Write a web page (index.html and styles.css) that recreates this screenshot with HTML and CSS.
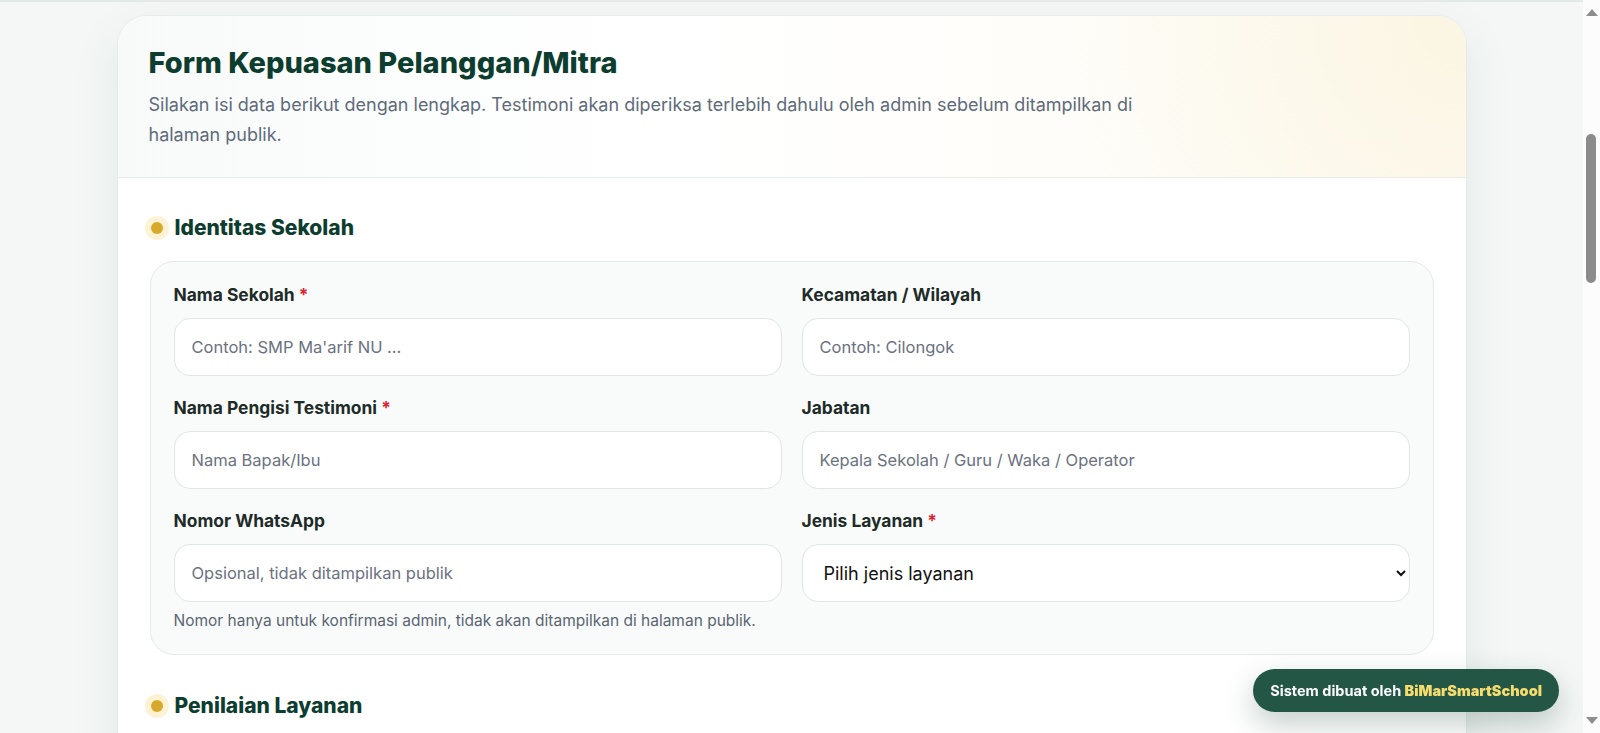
FILE: index.html
```html
<!DOCTYPE html>
<html lang="id">
<head>
  <meta charset="UTF-8" />
  <title>Form Kepuasan Pelanggan/Mitra - BiMarSmartSchool</title>
  <link rel="stylesheet" href="styles.css">
</head>
<body>

  <main class="page">
    <form class="form-card" onsubmit="return false">

      <div class="form-head">
        <h1>Form Kepuasan Pelanggan/Mitra</h1>
        <p>Silakan isi data berikut dengan lengkap. Testimoni akan diperiksa terlebih dahulu oleh admin sebelum ditampilkan di halaman publik.</p>
      </div>

      <div class="form-body">

        <!-- identitas -->
        <section class="form-section">
          <h3 class="section-title"><span class="dot"></span>Identitas Sekolah</h3>
          <div class="panel grid-2">
            <div class="field">
              <label>Nama Sekolah <span class="req">*</span></label>
              <input type="text" placeholder="Contoh: SMP Ma'arif NU ..." />
            </div>
            <div class="field">
              <label>Kecamatan / Wilayah</label>
              <input type="text" placeholder="Contoh: Cilongok" />
            </div>
            <div class="field">
              <label>Nama Pengisi Testimoni <span class="req">*</span></label>
              <input type="text" placeholder="Nama Bapak/Ibu" />
            </div>
            <div class="field">
              <label>Jabatan</label>
              <input type="text" placeholder="Kepala Sekolah / Guru / Waka / Operator" />
            </div>
            <div class="field">
              <label>Nomor WhatsApp</label>
              <input type="text" placeholder="Opsional, tidak ditampilkan publik" />
              <small class="hint">Nomor hanya untuk konfirmasi admin, tidak akan ditampilkan di halaman publik.</small>
            </div>
            <div class="field">
              <label>Jenis Layanan <span class="req">*</span></label>
              <select>
                <option>Pilih jenis layanan</option>
                <option>Aplikasi Rapor Digital</option>
                <option>Website Sekolah</option>
                <option>PPDB Online</option>
              </select>
            </div>
          </div>
        </section>

        <!-- penilaian -->
        <section class="form-section">
          <h3 class="section-title"><span class="dot"></span>Penilaian Layanan</h3>
          <div class="panel rating-panel"></div>
        </section>

      </div>
    </form>
  </main>

  <div class="credit">Sistem dibuat oleh <b>BiMarSmartSchool</b></div>

  <!-- scrollbar jendela -->
  <div class="scrollbar" aria-hidden="true">
    <span class="sb-up"></span>
    <span class="sb-thumb"></span>
    <span class="sb-down"></span>
  </div>

</body>
</html>
```

FILE: styles.css
```css
* {
  box-sizing: border-box;
}

body {
  margin: 0;
  padding-right: 17px;
  background: #f4f7f6;
  border-top: 2px solid #e4e8e7;
  font-family: 'Inter', 'Noto Sans', sans-serif;
  color: #1e2b28;
}

/* kartu form */
.page {
  max-width: 1350px;
  margin: 0 auto;
  padding: 13px 0 60px;
}

.form-card {
  background: white;
  border: 1px solid #e6ebe9;
  border-radius: 30px;
  box-shadow: 0 18px 50px rgba(20, 60, 45, 0.08);
  overflow: hidden;
}

.form-head {
  padding: 29px 31px 27px;
  border-bottom: 1px solid #e8edeb;
  background:
    radial-gradient(circle at 100% 0%, #fbf5e2 0%, rgba(251,245,226,0) 30%),
    linear-gradient(90deg, #f8fafa 0%, #ffffff 40%, #fdfbf4 100%);
}

.form-head h1 {
  margin: 0 0 9px;
  font-size: 29px;
  line-height: 36px;
  font-weight: 800;
  color: #0c3d2f;
}

.form-head p {
  margin: 0;
  max-width: 1000px;
  font-size: 18px;
  line-height: 30px;
  color: #5e6b7b;
}

.form-body {
  padding: 35px 32px 44px;
  display: flex;
  flex-direction: column;
  gap: 36px;
}

.section-title {
  display: flex;
  align-items: center;
  gap: 12px;
  margin: 0 0 18px;
  font-size: 21px;
  line-height: 30px;
  font-weight: 800;
  color: #0c3d2f;
}

.dot {
  width: 12px;
  height: 12px;
  margin-left: 1px;
  border-radius: 50%;
  background: #d6a92b;
  box-shadow: 0 0 0 6px #fdf3d4;
}

.panel {
  background: #f9fbfa;
  border: 1px solid #e5eae8;
  border-radius: 24px;
  padding: 22px 23px 23px;
}

.rating-panel {
  min-height: 400px;
}

.grid-2 {
  display: grid;
  grid-template-columns: 1fr 1fr;
  column-gap: 20px;
  row-gap: 21px;
}

.field label {
  display: block;
  font-size: 17.4px;
  line-height: 22px;
  font-weight: 700;
  color: #1e2b28;
  margin-bottom: 12px;
}

.req {
  color: #e0202f;
}

.field input,
.field select {
  width: 100%;
  height: 58px;
  padding: 0 17px;
  border: 1px solid #e1e6e4;
  border-radius: 16px;
  background: white;
  font-family: inherit;
  font-size: 16.5px;
  color: #111;
  outline: none;
}

.field select {
  font-size: 18px;
  padding-left: 17px;
  padding-right: 10px;
}

.field input::placeholder {
  color: #6b7280;
}

.hint {
  display: block;
  margin-top: 9px;
  font-size: 15.5px;
  line-height: 20px;
  color: #5a6573;
}

/* kredit melayang */
.credit {
  position: fixed;
  right: 41px;
  bottom: 21px;
  height: 43px;
  line-height: 43px;
  padding: 0 17px;
  border-radius: 999px;
  background: #245646;
  color: white;
  font-size: 14.5px;
  font-weight: 700;
  box-shadow: 0 12px 30px rgba(20, 60, 45, 0.25);
}

.credit b {
  color: #f7dc6f;
}

/* scrollbar */
.scrollbar {
  position: fixed;
  top: 0;
  right: 0;
  bottom: 0;
  width: 17px;
  background: #fcfcfc;
}

.sb-up,
.sb-down {
  position: absolute;
  left: 3px;
  width: 0;
  height: 0;
  border-left: 6px solid transparent;
  border-right: 6px solid transparent;
}

.sb-up {
  top: 9px;
  border-bottom: 7px solid #8d8d8d;
}

.sb-down {
  bottom: 9px;
  border-top: 7px solid #8d8d8d;
}

.sb-thumb {
  position: absolute;
  top: 134px;
  left: 3px;
  width: 10px;
  height: 149px;
  border-radius: 5px;
  background: #8b8b8b;
}
```
